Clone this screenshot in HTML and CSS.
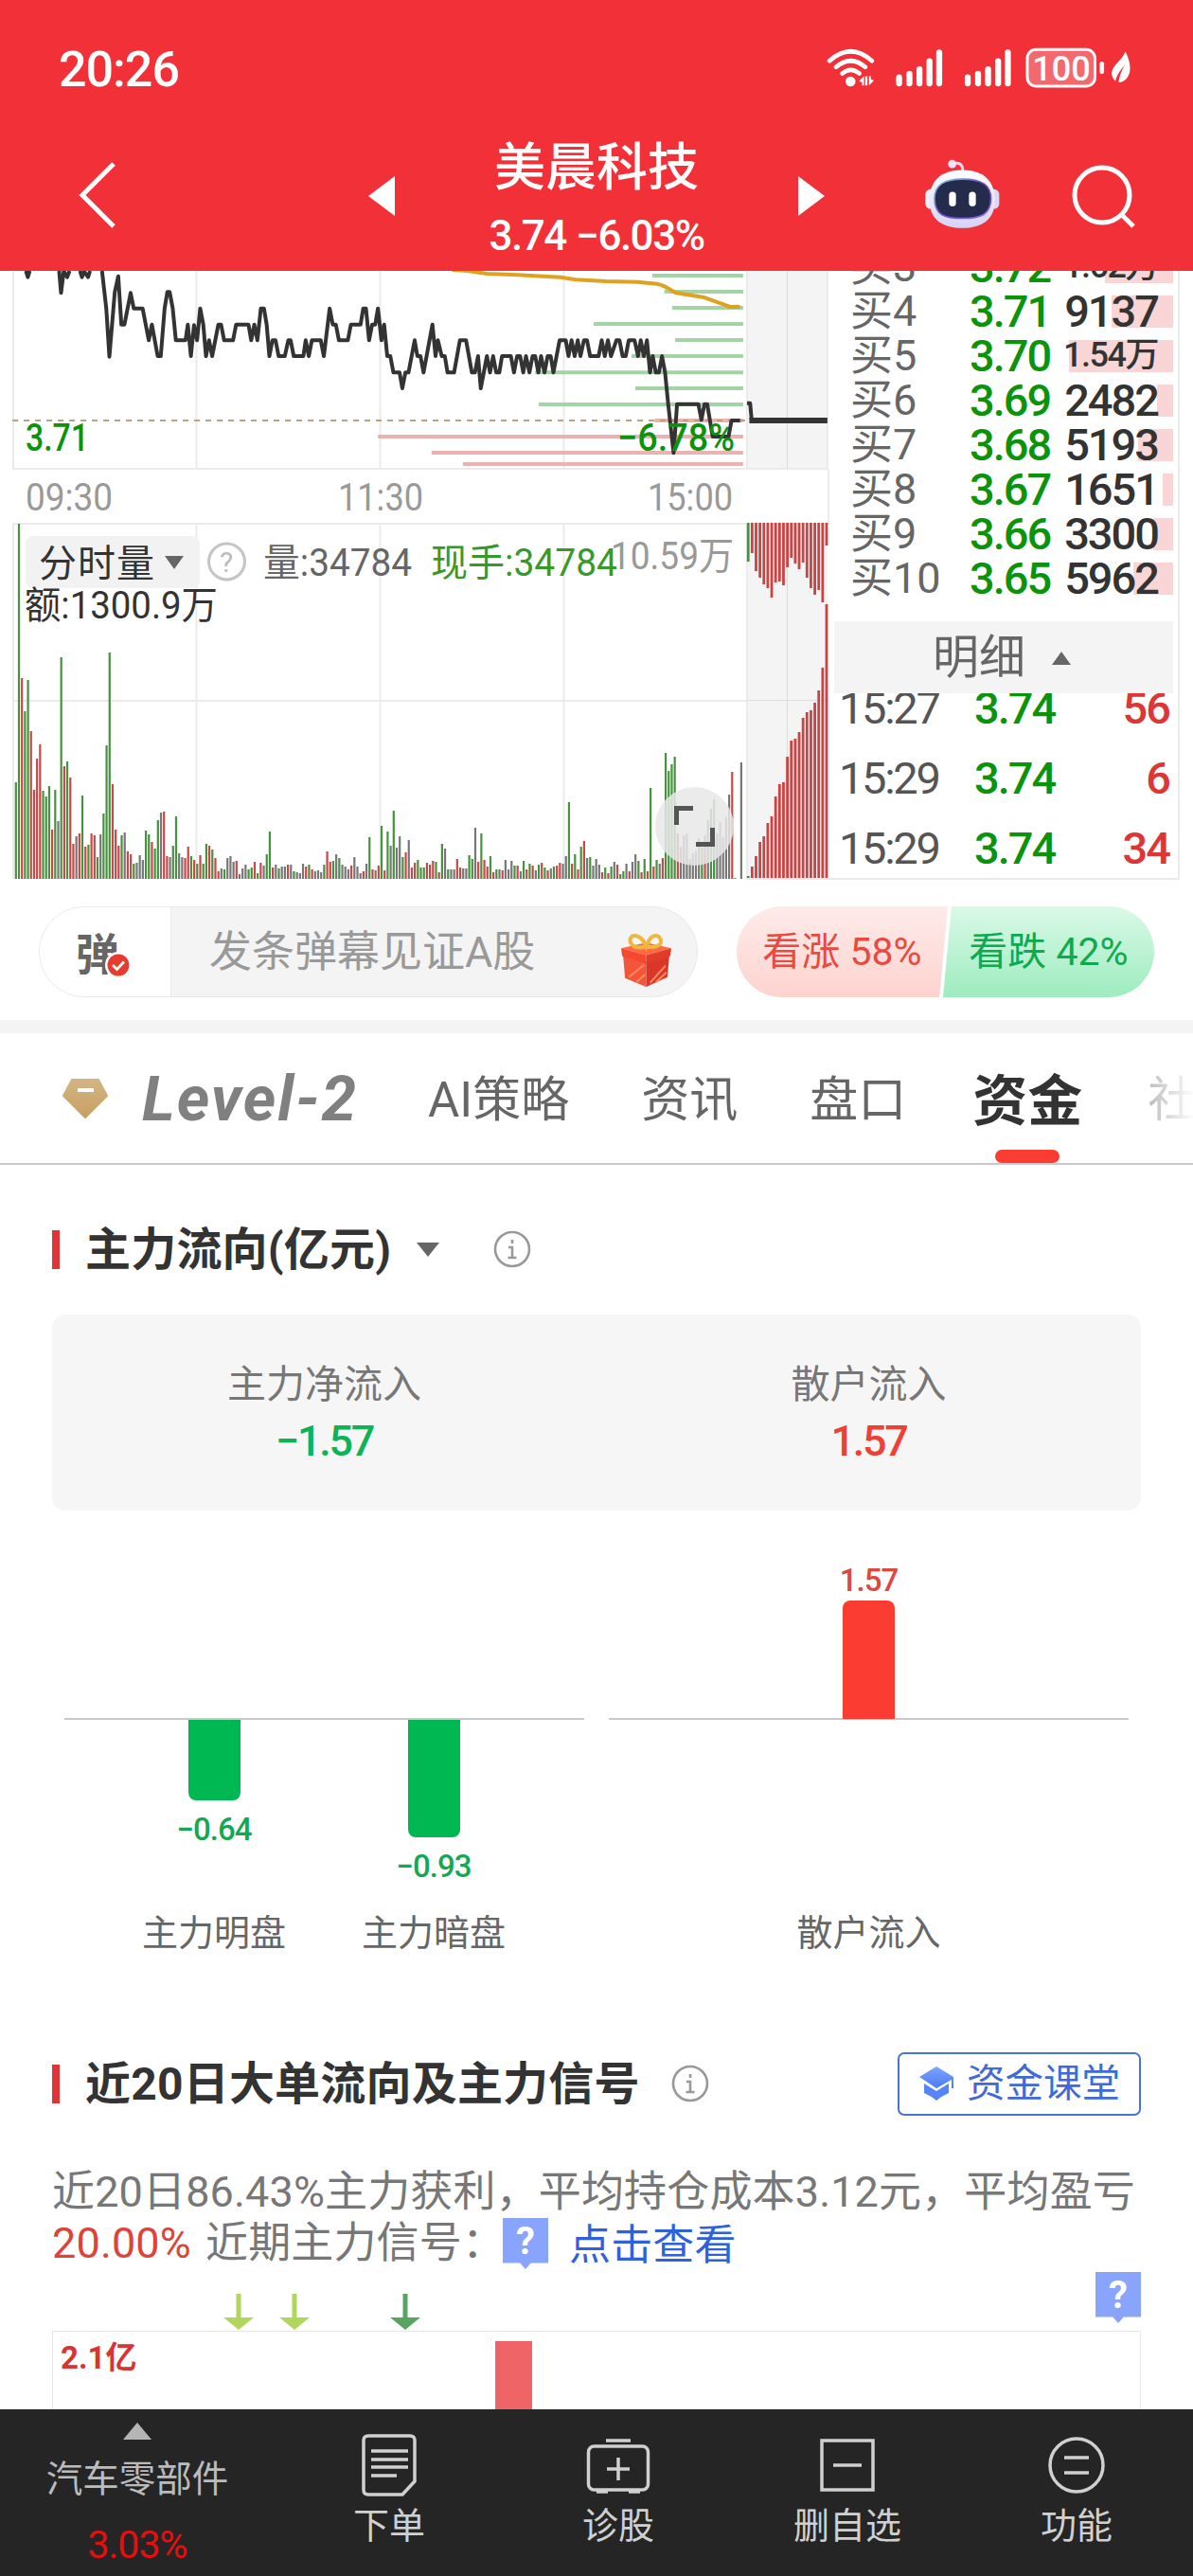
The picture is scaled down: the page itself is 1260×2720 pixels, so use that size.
FILE: index.html
```
<!DOCTYPE html>
<html lang="zh-CN">
<head>
    <meta charset="UTF-8">
    <title>美晨科技</title>
    <link rel="stylesheet" href="styles.css">
</head>
<body>
    <header class="header">
        <div class="status-bar">
            <span class="clock">20:26</span>
            <svg class="status-icons" viewBox="30 55 990 145">
                <g fill="none" stroke="#fff" stroke-width="14" stroke-linecap="round">
                    <path d="M48 104Q116 44 183 104M69 124Q116 84 162 124M89 144Q116 122 143 144"/>
                    <path stroke-width="19" d="M270 157V176M303 145V176M335 131V176M367 105V176M398 77V176"/>
                    <path stroke-width="19" d="M489 157V176M522 145V176M554 131V176M586 105V176M617 77V176"/>
                    <path d="M917 113V139"/>
                </g>
                <circle cx="115" cy="170" r="16" fill="#fff"/>
                <path fill="#fff" d="M142 169L158 153V183H152V173ZM190 167L174 183V153H180V163ZM162 153H169V183H162Z"/>
                <rect x="679" y="68" width="216" height="117" rx="28" fill="#f4696e" stroke="#fff" stroke-width="9"/>
                <text x="695" y="168" textLength="186" lengthAdjust="spacingAndGlyphs" class="battery-text">100</text>
                <path fill="#fff" d="M992 75C1030 150 985 176 970 172Q976 140 990 118Q965 145 960 169C925 130 978 112 992 75Z"/>
            </svg>
        </div>
        <div class="nav-bar">
            <svg class="back" viewBox="0 0 40 72"><path d="M38 3L5 36L38 69"/></svg>
            <svg class="prev" viewBox="0 0 28 42"><path d="M28 0V42L0 21Z"/></svg>
            <div class="stock">
                <div class="stock-name">美晨科技</div>
                <div class="stock-price">3.74 −6.03%</div>
            </div>
            <svg class="next" viewBox="0 0 28 42"><path d="M0 0V42L28 21Z"/></svg>
            <svg class="robot" viewBox="350 412 240 224">
                <defs>
                    <linearGradient id="shell" x1="0" y1="0" x2="0" y2="1">
                        <stop offset="0" stop-color="#fff"/><stop offset="1" stop-color="#d5d3f6"/>
                    </linearGradient>
                    <linearGradient id="rim" x1="0" y1="0" x2="1" y2="1">
                        <stop offset="0" stop-color="#7fd5df"/><stop offset=".5" stop-color="#7246c8"/><stop offset="1" stop-color="#8a6bea"/>
                    </linearGradient>
                </defs>
                <path d="M440 430Q472 420 473 452" fill="none" stroke="#ecdaf2" stroke-width="9"/>
                <circle cx="439" cy="430" r="13" fill="#efe4f8"/>
                <rect x="354" y="510" width="40" height="62" rx="16" fill="#f1effb"/>
                <rect x="548" y="510" width="40" height="62" rx="16" fill="#dcd9f8"/>
                <path d="M471 449C540 449 574 485 574 545C574 605 535 633 471 633C407 633 367 605 367 545C367 485 402 449 471 449Z" fill="url(#shell)"/>
                <path d="M472 478C530 478 562 495 562 540C562 590 530 602 472 602C414 602 383 590 383 540C383 495 414 478 472 478Z" fill="#242b4b" stroke="url(#rim)" stroke-width="5"/>
                <rect x="429" y="518" width="22" height="46" rx="11" fill="#fff"/>
                <rect x="492" y="518" width="22" height="46" rx="11" fill="#fff"/>
            </svg>
            <svg class="search" viewBox="0 0 68 68"><circle cx="33" cy="33" r="29"/><path d="M53 53L66 66"/></svg>
        </div>
    </header>

    <section class="market">
        <div class="charts">
            <svg class="chart-svg" viewBox="0 286 876 646">
                <rect x="788" y="286" width="86" height="210" fill="#f4f4f4"/>
                <rect x="788" y="552" width="86" height="376" fill="#f4f4f4"/>
                <path class="grid" d="M14 286V495M207.500 286V495M401.500 286V495M595.500 286V495M789 286V495M874 286V495M13 495H874M13 553H788M14 553V928M207.500 553V928M401.500 553V928M595.500 553V928M789 553V928M13 740H788M788 928H876M875 495V553"/>
                <path d="M831.500 286V495M831.500 553V928M788 739.500H874" stroke="#dcdcdc" stroke-width="1" fill="none"/>
                <!-- traced price layer: shared scale for the lines below -->
                <g class="price" transform="translate(0 280) scale(.40816 .33333)">
                    <path class="level-green" d="M1688 33H1923M1719 84H1923M1739 135H1923M1536 186H1923M1747 237H1923M1634 288H1923M1385 340H1923M1644 390H1923M1394 441H1923"/>
                    <path class="level-red" d="M1694 492H1923M978 543H1923M1117 594H1923M1198 630H1923"/>
                    <path class="base-line" d="M32 492H1930"/>
                    <path class="avg-line" d="M1170 15L1210 18L1260 27L1340 31L1450 38L1490 46L1568 51L1649 53L1700 59Q1715 61 1749 88L1819 101L1889 132H1915"/>
                    <path class="price-line" d="M67 18L72 38L77 18M153 18L158 88L165 18L174 38L180 18M207 18L212 38L218 20L228 38L233 18M264 18L275 137L283 290L297 85L306 35L314 188H322L338 88L346 137H369L385 238L393 188L408 288H416L426 137L433 85H439L447 137L455 238H480L486 188L494 288L502 190L510 238L518 137L526 188L533 288L541 238L549 288L565 188H572L580 238H603L611 188H643L650 238L658 188L666 238L675 137H683L690 188L697 288L705 238H713L721 288H737L746 238H752L760 288H785L791 238L799 288L807 238H830L838 288L853 137L861 188H869L877 238H900L908 188H933L940 137H947L955 238L963 188H971L978 137L987 238L994 188L1002 288H1010L1018 340H1034L1041 390L1049 340H1057L1073 238L1080 288H1088L1096 340L1119 188L1127 288L1133 238L1143 288H1151L1158 340H1175L1190 238H1206L1221 340H1229L1237 288L1244 390L1260 288L1268 340L1276 288L1284 340H1292L1299 288H1322L1330 340L1338 288H1346L1354 340L1361 288L1370 340L1378 288H1385L1393 340L1400 288L1409 340L1417 288H1425L1432 340L1448 238H1464L1471 288L1479 238L1487 288L1495 238L1502 288L1511 238H1519L1527 288H1549L1557 238L1565 288L1573 238L1581 288L1595 238H1603L1611 288H1619L1627 238H1642L1651 288L1658 238L1666 288L1674 238L1682 340L1689 288L1697 340H1705L1713 288L1721 340L1729 440L1743 595L1752 440H1807L1815 490L1823 440H1830L1844 543H1885L1893 492H1915M1933 437H1941L1945 490"/>
                    <path class="auction-line" d="M1939 492H2141"/>
                </g>
                <g id="volume"></g>
                <g class="axis">
                    <text x="27" y="476" textLength="67" lengthAdjust="spacingAndGlyphs" class="green">3.71</text>
                    <text x="652" y="476" textLength="124" lengthAdjust="spacingAndGlyphs" class="green">−6.78%</text>
                    <text x="27" y="538.500" textLength="92" lengthAdjust="spacingAndGlyphs">09:30</text>
                    <text x="357" y="538.500" textLength="90" lengthAdjust="spacingAndGlyphs">11:30</text>
                    <text x="684" y="538.500" textLength="90" lengthAdjust="spacingAndGlyphs">15:00</text>
                    <text x="645" y="601" textLength="130" lengthAdjust="spacingAndGlyphs">10.59万</text>
                </g>
                <rect x="27" y="566" width="184" height="55" rx="8" fill="#f2f2f2"/>
                <path d="M174 587H194L184 601Z" fill="#666"/>
                <circle cx="239.500" cy="593" r="19" fill="none" stroke="#c4c4c4" stroke-width="3"/>
                <g class="vol-title">
                    <text x="41" y="609" textLength="122" fill="#333">分时量</text>
                    <text x="232" y="604" class="hint">?</text>
                    <text x="278" y="608" textLength="157" lengthAdjust="spacingAndGlyphs" fill="#666">量:34784</text>
                    <text x="455" y="608" textLength="197" lengthAdjust="spacingAndGlyphs" fill="#37992a">现手:34784</text>
                    <text x="26" y="652.500" textLength="204" lengthAdjust="spacingAndGlyphs" fill="#333">额:1300.9万</text>
                </g>
                <circle cx="733.500" cy="872.500" r="41.500" fill="#e8e8e8" opacity=".85"/>
                <path d="M714.500 871V853.500H732M735 891.500H752.500V874" fill="none" stroke="#555" stroke-width="5"/>
            </svg>
        </div>
        <div class="book">
            <div class="bids">
                <div class="bid"><span>买3</span><b>3.72</b><i class="small" style="--w:72px">1.62万</i></div>
                <div class="bid"><span>买4</span><b>3.71</b><i style="--w:65px">9137</i></div>
                <div class="bid"><span>买5</span><b>3.70</b><i class="small" style="--w:110px">1.54万</i></div>
                <div class="bid"><span>买6</span><b>3.69</b><i style="--w:17px">2482</i></div>
                <div class="bid"><span>买7</span><b>3.68</b><i style="--w:37px">5193</i></div>
                <div class="bid"><span>买8</span><b>3.67</b><i style="--w:11px">1651</i></div>
                <div class="bid"><span>买9</span><b>3.66</b><i style="--w:21px">3300</i></div>
                <div class="bid"><span>买10</span><b>3.65</b><i style="--w:42px">5962</i></div>
            </div>
            <div class="detail-head">明细<svg viewBox="0 0 20 14"><path d="M0 14H20L10 0Z"/></svg></div>
            <div class="trades">
                <div class="trade"><span>15:27</span><b>3.74</b><i>56</i></div>
                <div class="trade"><span>15:29</span><b>3.74</b><i>6</i></div>
                <div class="trade"><span>15:29</span><b>3.74</b><i>34</i></div>
            </div>
        </div>
    </section>

    <section class="barrage">
        <div class="barrage-input">
            <div class="barrage-switch">弹<svg viewBox="0 0 28 28"><circle cx="14" cy="14" r="14" fill="#fff"/><circle cx="14" cy="14" r="11.500" fill="#e63c30"/><path d="M8 14L12.500 18.500L20 10.500" fill="none" stroke="#fff" stroke-width="2.800"/></svg></div>
            <div class="barrage-text">发条弹幕见证A股</div>
            <svg class="gift" viewBox="0 0 52 56">
                <path d="M2 23L26 30V56L4 47Z" fill="#f2553a"/>
                <path d="M50 23L26 30V56L48 46Z" fill="#d9372a"/>
                <path d="M0 16L26 10L52 16L26 23Z" fill="#ff6a42"/>
                <path d="M0 16L26 23V32L1 24Z" fill="#f5492f"/>
                <path d="M52 16L26 23V32L51 24Z" fill="#e23b2a"/>
                <path d="M8 46L24 33M16 51L25 43M30 52L46 34M36 51L47 41" stroke="#ff8a5c" stroke-width="2"/>
                <path d="M26 14C8 20 5 2 15 3Q22 4 26 14C30 4 34 1 39 4C45 10 39 17 26 14Z" fill="none" stroke="#f0b63f" stroke-width="4"/>
            </svg>
        </div>
        <div class="vote">
            <div class="vote-up">看涨 58%</div>
            <div class="vote-down">看跌 42%</div>
        </div>
    </section>

    <nav class="tabs">
        <svg class="diamond" viewBox="0 0 48 42">
            <defs><linearGradient id="gold" x1="0" y1="0" x2="0" y2="1"><stop offset="0" stop-color="#d3b583"/><stop offset="1" stop-color="#c89f62"/></linearGradient></defs>
            <path d="M10 1H38L47 18L24 41L1 18Z" fill="url(#gold)" stroke="url(#gold)" stroke-width="2" stroke-linejoin="round"/>
            <path d="M16 12H33" stroke="#fff" stroke-width="4"/>
        </svg>
        <span class="tab level2">Level-2</span>
        <span class="tab">AI策略</span>
        <span class="tab">资讯</span>
        <span class="tab">盘口</span>
        <span class="tab active">资金</span>
        <span class="tab last">社区</span>
    </nav>

    <section class="flow">
        <div class="title">
            <h2>主力流向(亿元)</h2>
            <svg class="caret" viewBox="0 0 24 15"><path d="M0 0H24L12 15Z"/></svg>
            <svg class="info" viewBox="0 0 40 40"><circle cx="20" cy="20" r="18"/><path d="M20 10V14M16 18H20V29M15.500 29H24.500"/></svg>
        </div>
        <div class="summary">
            <div><p>主力净流入</p><b class="down">−1.57</b></div>
            <div><p>散户流入</p><b class="up">1.57</b></div>
        </div>
        <div class="bars">
            <div class="bar-group">
                <div class="bar-col">
                    <div class="above"></div>
                    <div class="below"><div class="bar" style="height:85px"></div><span>−0.64</span></div>
                    <p>主力明盘</p>
                </div>
                <div class="bar-col">
                    <div class="above"></div>
                    <div class="below"><div class="bar" style="height:124px"></div><span>−0.93</span></div>
                    <p>主力暗盘</p>
                </div>
            </div>
            <div class="bar-group single">
                <div class="bar-col">
                    <div class="above"><span>1.57</span><div class="bar" style="height:125px"></div></div>
                    <div class="below"></div>
                    <p>散户流入</p>
                </div>
            </div>
        </div>
    </section>

    <section class="signal">
        <div class="title">
            <h2>近20日大单流向及主力信号</h2>
            <svg class="info" viewBox="0 0 40 40"><circle cx="20" cy="20" r="18"/><path d="M20 10V14M16 18H20V29M15.500 29H24.500"/></svg>
            <a class="course">
                <svg viewBox="0 0 38 36">
                    <defs><linearGradient id="cap" x1="0" y1="0" x2="0" y2="1"><stop offset="0" stop-color="#7fa4ff"/><stop offset="1" stop-color="#4a7bf5"/></linearGradient></defs>
                    <path d="M19 0L37 11V23H35V14L19 23L1 11Z" fill="url(#cap)"/>
                    <path d="M6 18L19 26L32 18V28Q25 31 19 36Q13 31 6 28Z" fill="#5585f8"/>
                </svg>资金课堂
            </a>
        </div>
        <div class="desc">
            <p>近20日86.43%主力获利，平均持仓成本3.12元，平均盈亏</p>
            <p class="second"><em>20.00%</em><span>近期主力信号：</span><i class="badge">?</i><a>点击查看</a></p>
        </div>
        <div class="signal-marks">
            <svg viewBox="0 0 1150 62">
                <g stroke-width="5"><path d="M197 23V54M256 23V54" stroke="#b0d65c"/><path d="M373 23V54" stroke="#58a462"/></g>
                <path d="M181 48H213L197 61ZM240 48H272L256 61Z" fill="#b0d65c"/><path d="M357 48H389L373 61Z" fill="#58a462"/>
            </svg>
            <i class="badge">?</i>
        </div>
        <div class="signal-chart">
            <span>2.1亿</span>
            <div class="signal-bar"></div>
        </div>
    </section>

    <footer class="toolbar">
        <div class="sector">
            <svg viewBox="0 0 30 18"><path d="M0 18H30L15 0Z"/></svg>
            <span>汽车零部件</span>
            <b>3.03%</b>
        </div>
        <div class="tool">
            <svg viewBox="0 0 68 68"><path d="M12 4H56Q61 4 61 9V52L48 66H12Q7 66 7 61V9Q7 4 12 4Z"/><path d="M15 20H54M15 29H54M15 37H54M15 46H42"/></svg>
            <span>下单</span>
        </div>
        <div class="tool">
            <svg viewBox="0 0 68 68"><rect x="2.500" y="15" width="63" height="46" rx="6"/><path d="M21 9H47M34 27V51M22 39H46M11 63H23M45 63H57"/></svg>
            <span>诊股</span>
        </div>
        <div class="tool">
            <svg viewBox="0 0 68 68"><rect x="7" y="9" width="54" height="52"/><path d="M19 35H49"/></svg>
            <span>删自选</span>
        </div>
        <div class="tool">
            <svg viewBox="0 0 68 68"><circle cx="34" cy="35" r="28"/><path d="M21 27H47M21 43H47"/></svg>
            <span>功能</span>
        </div>
    </footer>
    <script src="script.js"></script>
</body>
</html>
```
FILE: styles.css
```
* {
    box-sizing: border-box;
    margin: 0;
    padding: 0;
}

body {
    width: 1260px;
    height: 2720px;
    overflow: hidden;
    background: #fff;
    color: #333;
    font-family: Roboto, "Noto Sans CJK SC", sans-serif;
    display: flex;
    flex-direction: column;
}

svg {
    display: block;
    flex: none;
}

i, em {
    font-style: normal;
}

.header {
    height: 286px;
    background: #f13038;
    color: #fff;
    flex: none;
}

.status-bar {
    height: 144px;
    padding: 0 61px 0 62px;
    display: flex;
    align-items: center;
    justify-content: space-between;
}

.clock {
    font-size: 52px;
    letter-spacing: -1px;
    line-height: 60px;
    padding-top: 3px;
    font-weight: 500;
}

.status-icons {
    width: 330px;
    height: 48px;
}

.battery-text {
    font-size: 110px;
    font-weight: 500;
    fill: #fff;
}

.nav-bar {
    height: 142px;
    padding: 0 60px 0 82px;
    display: flex;
    align-items: flex-start;
}

.back {
    width: 40px;
    height: 72px;
    margin: 26px 267px 0 0;
    fill: none;
    stroke: #fff;
    stroke-width: 5;
}

.prev, .next {
    width: 28px;
    height: 42px;
    margin-top: 42px;
    fill: #fff;
}

.stock {
    width: 426px;
    text-align: center;
}

.stock-name {
    font-size: 54px;
    line-height: 66px;
    font-weight: 500;
    padding-top: 1px;
}

.stock-price {
    font-size: 44px;
    line-height: 54px;
    margin-top: 11px;
    letter-spacing: -1.500px;
    word-spacing: 1px;
    font-weight: 500;
}

.robot {
    width: 80px;
    height: 75px;
    margin: 23px 0 0 105px;
}

.search {
    width: 68px;
    height: 68px;
    margin: 29px 0 0 75px;
    fill: none;
    stroke: #fff;
    stroke-width: 5;
}

/* chart and order book */
.market {
    height: 646px;
    display: flex;
    flex: none;
    overflow: hidden;
}

.charts {
    width: 876px;
}

.chart-svg {
    width: 876px;
    height: 646px;
}

.grid {
    fill: none;
    stroke: #ebebeb;
    stroke-width: 2;
}

.price path {
    fill: none;
    vector-effect: non-scaling-stroke;
    stroke-linejoin: round;
}

.price .level-green {
    stroke: #a4d3a6;
    stroke-width: 4;
}

.price .level-red {
    stroke: #edb1b1;
    stroke-width: 4;
}

.price .base-line {
    stroke: #b9a47e;
    stroke-width: 2;
    stroke-dasharray: 6 6;
}

.price .avg-line {
    stroke: #e0a020;
    stroke-width: 4;
}

.price .price-line {
    stroke: #333;
    stroke-width: 4;
}

.price .auction-line {
    stroke: #333;
    stroke-width: 6;
}

.axis text {
    font-size: 40px;
    fill: #999;
}

.axis .green {
    fill: #0c930c;
    font-weight: 500;
}

.vol-title text {
    font-size: 40px;
}

.vol-title .hint {
    font-size: 30px;
    fill: #bbb;
}

.book {
    width: 370px;
    height: 643px;
    border-right: 2px solid #ebebeb;
    border-bottom: 2px solid #ebebeb;
    padding-left: 5px;
}

.bids {
    height: 370px;
    display: flex;
    flex-direction: column;
    justify-content: flex-end;
    padding: 0 5px 22px 17px;
    overflow: hidden;
}

.bid {
    height: 47px;
    flex: none;
    display: grid;
    grid-template-columns: 126px 88px 127px;
    align-items: center;
    line-height: 47px;
    white-space: nowrap;
}

.bid span {
    font-size: 45px;
    color: #666;
}

.bid b {
    font-size: 47px;
    font-weight: 500;
    color: #0c930c;
    letter-spacing: -2px;
}

.bid i {
    font-size: 47px;
    font-weight: 500;
    text-align: right;
    padding-right: 16px;
    letter-spacing: -2px;
    background: linear-gradient(#f9d5d5, #f9d5d5) right center / var(--w) 34px no-repeat;
}

.bid .small {
    font-size: 36px;
    letter-spacing: -1.500px;
}

.detail-head {
    width: 358px;
    height: 76px;
    background: #f4f4f4;
    color: #666;
    font-size: 49px;
    display: flex;
    align-items: center;
    justify-content: center;
    gap: 28px;
    padding: 2px 4px 0 0;
    line-height: 76px;
}

.detail-head svg {
    width: 20px;
    height: 14px;
    fill: #666;
}

.trades {
    height: 195px;
    overflow: hidden;
    display: flex;
    flex-direction: column;
    justify-content: flex-end;
    padding: 0 7px 0 5px;
}

.trade {
    height: 74px;
    flex: none;
    display: grid;
    grid-template-columns: 143px 120px 86px;
    align-items: center;
    font-size: 47px;
    font-weight: 500;
    line-height: 74px;
    padding-top: 6px;
    letter-spacing: -2px;
}

.trade span {
    color: #555;
    font-weight: 400;
    letter-spacing: -2.300px;
}

.trade b {
    font-weight: 500;
    color: #0c930c;
}

.trade i {
    text-align: right;
    color: #dc3636;
}

/* barrage row */
.barrage {
    height: 159px;
    flex: none;
    padding: 25px 41px 0;
    display: flex;
    justify-content: space-between;
    border-bottom: 14px solid #f4f4f4;
}

.barrage-input {
    width: 696px;
    height: 96px;
    border: 1px solid #e9e9e9;
    border-radius: 48px;
    background: #f4f4f4;
    overflow: hidden;
    display: flex;
    align-items: center;
}

.barrage-switch {
    width: 139px;
    height: 94px;
    background: #fff;
    border-right: 1px solid #e9e9e9;
    padding: 0 0 2px 38px;
    font-size: 46px;
    font-weight: 700;
    color: #666;
    display: flex;
    align-items: center;
}

.barrage-switch svg {
    width: 28px;
    height: 28px;
    margin: 30px 0 0 -15px;
}

.barrage-text {
    margin-left: 40px;
    width: 435px;
    font-size: 45px;
    color: #999;
    line-height: 60px;
    padding-top: 2px;
}

.gift {
    width: 53px;
    height: 57px;
    margin-top: 16px;
}

.vote {
    display: flex;
    width: 441px;
    height: 96px;
    font-size: 41px;
    line-height: 96px;
}

.vote-up, .vote-down {
    width: 223px;
    height: 96px;
    text-align: center;
}

.vote-up {
    background: linear-gradient(#feebe9, #fdd3cf);
    color: #e84a3f;
    border-radius: 48px 0 0 48px;
    clip-path: polygon(0 0, 100% 0, 96% 100%, 0 100%);
}

.vote-down {
    background: linear-gradient(#daf9e7, #9decbf);
    color: #0fa94f;
    border-radius: 0 48px 48px 0;
    clip-path: polygon(4% 0, 100% 0, 100% 100%, 0 100%);
    margin-left: -5px;
}

/* tabs */
.tabs {
    height: 139px;
    flex: none;
    display: flex;
    align-items: center;
    border-bottom: 2px solid #c9c9c9;
    padding-left: 66px;
    white-space: nowrap;
    overflow: hidden;
}

.diamond {
    width: 48px;
    height: 42px;
}

.tab {
    font-size: 51px;
    line-height: 137px;
    padding-top: 4px;
    color: #666;
    margin-right: 76px;
    flex: none;
}

.level2 {
    width: 230px;
    margin: 0 72px 0 36px;
    font-size: 66px;
    letter-spacing: 2px;
    font-weight: 700;
    font-style: italic;
    color: #808080;
    padding-top: 2px;
}

.active {
    font-size: 58px;
    font-weight: 700;
    color: #333;
    margin: 0 69px 0 -6px;
    align-self: stretch;
    display: flex;
    flex-direction: column;
    align-items: center;
}

.active::after {
    content: "";
    width: 68px;
    height: 14px;
    flex: none;
    margin-top: -18px;
    border-radius: 7px;
    background: #fa3c32;
}

.last {
    color: transparent;
    background: linear-gradient(90deg, #bbb, #fff 50px);
    background-clip: text;
    -webkit-background-clip: text;
}

/* section titles */
.title {
    display: flex;
    align-items: center;
    height: 68px;
}

.title h2 {
    font-size: 48px;
    font-weight: 700;
    line-height: 68px;
    letter-spacing: .200px;
    display: flex;
    align-items: center;
    gap: 27px;
    padding-top: 1px;
}

.title h2::before {
    content: "";
    width: 8px;
    height: 41px;
    background: #e03436;
}

.caret {
    width: 26px;
    height: 15px;
    margin: 0 56px 0 26px;
    fill: #666;
}

.info {
    width: 40px;
    height: 40px;
    fill: none;
    stroke: #999;
    stroke-width: 2.600;
}

.flow {
    height: 936px;
    flex: none;
    padding: 55px 55px 0;
}

.summary {
    margin-top: 35px;
    height: 207px;
    border-radius: 14px;
    background: #f6f6f6;
    display: flex;
    text-align: center;
}

.summary > div {
    flex: 1;
    padding-top: 46px;
}

.summary p {
    font-size: 41px;
    line-height: 56px;
    color: #777;
}

.summary b {
    display: block;
    font-size: 45px;
    line-height: 60px;
    margin-top: 2px;
    font-weight: 500;
    letter-spacing: -2.300px;
}

.down {
    color: #10b255;
}

.up {
    color: #ee4035;
}

.bars {
    display: flex;
    justify-content: space-between;
    padding: 0 13px;
}

.bar-group {
    width: 549px;
    padding: 0 42px;
    display: flex;
    background: linear-gradient(#c9c9c9, #c9c9c9) 0 219px / 100% 2px no-repeat;
}

.bar-col {
    width: 232px;
    display: flex;
    flex-direction: column;
    align-items: center;
}

.single {
    justify-content: center;
}

.above, .below {
    height: 220px;
    display: flex;
    flex-direction: column;
    align-items: center;
    font-size: 33px;
    line-height: 42px;
    font-weight: 500;
    letter-spacing: -1px;
}

.above {
    justify-content: flex-end;
    color: #dd473e;
}

.below {
    height: 198px;
    color: #14a855;
    padding-top: 1px;
}

.bar {
    width: 55px;
    background: #00b851;
    border-radius: 0 0 8px 8px;
}

.above .bar {
    background: #fb3c32;
    border-radius: 8px 8px 0 0;
}

.below span {
    margin-top: 10px;
}

.bar-col p {
    font-size: 38px;
    line-height: 56px;
    color: #666;
}

/* 20-day signals */
.signal {
    height: 378px;
    flex: none;
    padding: 0 55px;
    overflow: hidden;
}

.signal .info {
    margin-left: 33px;
}

.course {
    margin-left: auto;
    width: 257px;
    height: 67px;
    border: 2px solid #4673d8;
    border-radius: 7px;
    color: #4169d8;
    font-size: 40.500px;
    display: flex;
    align-items: center;
    justify-content: center;
    gap: 13px;
    line-height: 64px;
}

.course svg {
    width: 38px;
    height: 36px;
}

.desc {
    margin-top: 54px;
    font-size: 45px;
    line-height: 54px;
    color: #777;
    white-space: nowrap;
    letter-spacing: .150px;
}

.desc p {
    height: 54px;
}

.second {
    display: flex;
}

.second em {
    color: #dd4339;
    width: 162px;
}

.second span {
    width: 314px;
    overflow: hidden;
}

.second a {
    margin-left: 22px;
    color: #2f61dd;
    font-size: 44px;
    line-height: 58px;
}

.badge {
    width: 48px;
    height: 54px;
    flex: none;
    background: #89a4fc;
    clip-path: polygon(0 0, 100% 0, 100% 88%, 62% 88%, 50% 100%, 38% 88%, 0 88%);
    color: #fff;
    font-size: 40px;
    font-weight: 700;
    line-height: 50px;
    text-align: center;
}

.signal-marks {
    height: 62px;
    margin-top: 3px;
    display: flex;
}

.signal-marks svg {
    width: 1150px;
    height: 62px;
}

.signal-marks .badge {
    margin-left: -48px;
}

.signal-chart {
    height: 100px;
    border: 1px solid #e6e6e6;
    padding-left: 8px;
    display: flex;
}

.signal-chart span {
    width: 459px;
    font-size: 33px;
    line-height: 55px;
    font-weight: 700;
    color: #d93434;
}

.signal-bar {
    width: 39px;
    margin-top: 10px;
    background: #ef6466;
}

/* bottom toolbar */
.toolbar {
    height: 176px;
    flex: none;
    background: #252525;
    color: #d0d0d0;
    display: flex;
}

.sector {
    width: 290px;
    padding-top: 14px;
    display: flex;
    flex-direction: column;
    align-items: center;
    font-size: 38.500px;
    color: #bbb;
}

.sector svg {
    width: 30px;
    height: 18px;
    fill: #b5b5b5;
}

.sector span {
    line-height: 60px;
    margin-top: 12px;
}

.sector b {
    color: #e60f0f;
    font-weight: 400;
    font-size: 41px;
    line-height: 60px;
    margin-top: 9px;
    letter-spacing: -1px;
}

.tool {
    width: 242px;
    padding-top: 24px;
    display: flex;
    flex-direction: column;
    align-items: center;
    font-size: 38px;
}

.tool svg {
    width: 68px;
    height: 68px;
    fill: none;
    stroke: #d0d0d0;
    stroke-width: 3.500;
}

.tool span {
    line-height: 56px;
    margin-top: 3px;
}
```
FILE: script.js
```
// Minute volume: colour letter + bar height (g = down, r = up, k = flat)
const volume = `g102 g375 r212 g177 g210 r156 r94 r127 r142 g93 g87 g98 r52 g94 k61 g234 r119 g124 r107 r37
k45 r48 g88 r34 g36 r48 r46 g23 k47 g69 g141 g239 r100 r52 r35 g46 k49 r29 r26 g16
k17 k25 k20 g51 g47 r39 g32 g62 k70 r71 r24 k23 g35 g66 k27 k23 r22 r34 g24 r20
g16 r25 g16 g37 r35 g31 r22 r8 k11 g10 k22 k24 k18 r19 k5 k11 k15 g10 g12 r18
g6 r17 k14 g26 g50 r12 k15 g11 k13 k13 r15 k15 g8 k7 k6 k16 r13 g15 r10 k8
k9 k7 g15 r29 r18 g19 k26 g22 k15 k13 k10 r14 k23 k13 k6 r8 k16 g44 r10 k9
r14 g56 r9 g50 k35 g72 k33 k45 g23 r28 k41 r12 r17 g20 g12 g12 r17 r15 r19 g18
r7 g37 k32 g10 k10 k10 r21 r12 k11 k11 g25 g21 k54 r18 g48 r20 r13 g24 r7 g10
k10 r9 k20 k10 k19 g14 r14 k8 g19 r10 g16 r14 k9 g15 r17 g12 r9 k11 g13 r14
r17 k16 k24 g81 r16 g26 r10 g34 r40 k22 g23 k14 k21 k15 r7 g12 r6 g13 k18 r15
g5 g8 k16 r8 k18 k26 g19 r7 g21 r8 g96 r13 g20 k16 r22 g133 g114 g121 g129 r48
k34 k46 k48 k21 k27 k29 k43 g33 r46 k62 g74 g84 k48 k60 k44 k65 k89 r113 k1 k0 k123`.split(/\s+/);

// Closing auction: matched volume grows from the bottom, unmatched hangs from the top
const matched = [2, 12, 23, 38, 44, 58, 65, 86, 99, 101, 128, 145, 147, 154, 169, 175, 177, 185, 198, 222, 289];
const unmatched = [41, 32, 51, 58, 65, 69, 79, 63, 62, 66, 47, 37, 43, 49, 42, 58, 69, 76, 71, 84, 24];

const colors = { g: '#46923e', r: '#c84848', k: '#777' };
const layer = document.getElementById('volume');

function addBar(x, y, width, height, color) {
    const rect = document.createElementNS('http://www.w3.org/2000/svg', 'rect');
    rect.setAttribute('x', x);
    rect.setAttribute('y', y);
    rect.setAttribute('width', width);
    rect.setAttribute('height', height);
    rect.setAttribute('fill', color);
    layer.appendChild(rect);
}

volume.forEach((item, i) => {
    const height = Number(item.slice(1));
    addBar(15.7 + i * 3.192, 928 - height, 2.2, height, colors[item[0]]);
});

matched.forEach((height, i) => {
    const color = i === 0 ? colors.g : '#cb4343';
    addBar(788.8 + i * 4.14, 927 - height, 2.8, height, color);
    addBar(788.8 + i * 4.14, 552, 2.8, unmatched[i], color);
});
```
